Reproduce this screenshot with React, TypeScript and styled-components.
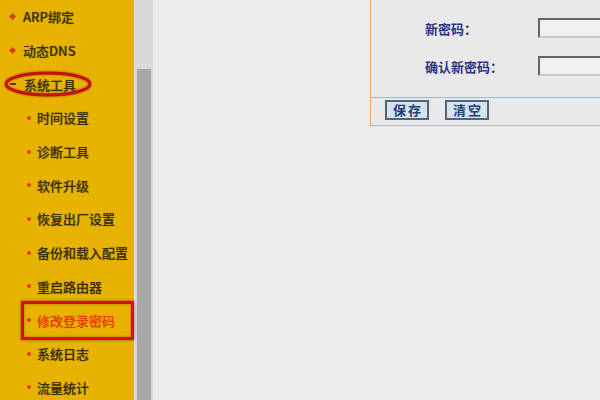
import styled, { createGlobalStyle } from 'styled-components';

const GlobalStyle = createGlobalStyle`
  html, body {
    margin: 0;
    padding: 0;
    width: 600px;
    height: 400px;
    overflow: hidden;
    background: #ebebeb;
    font-family: "Noto Sans CJK SC", "Liberation Sans", sans-serif;
  }
`;

type MenuItem = { label: string; level: 0 | 1; open?: boolean; active?: boolean; circled?: boolean };

const menu: MenuItem[] = [
  { label: 'ARP绑定', level: 0 },
  { label: '动态DNS', level: 0 },
  { label: '系统工具', level: 0, open: true, circled: true },
  { label: '时间设置', level: 1 },
  { label: '诊断工具', level: 1 },
  { label: '软件升级', level: 1 },
  { label: '恢复出厂设置', level: 1 },
  { label: '备份和载入配置', level: 1 },
  { label: '重启路由器', level: 1 },
  { label: '修改登录密码', level: 1, active: true },
  { label: '系统日志', level: 1 },
  { label: '流量统计', level: 1 },
];

// first row sits above the top edge; only its input's lower border shows
const fields = ['', '新密码：', '确认新密码：'];

export default function App() {
  return (
    <>
      <GlobalStyle />
      <Page>
        <Sidebar>
          {menu.map((m) => (
            <Item key={m.label} $level={m.level} $active={m.active}>
              <Bullet $level={m.level} $open={m.open} />
              <ItemText $active={m.active}>{m.label}</ItemText>
              {m.circled && (
                <Ellipse viewBox="0 0 90 28" width="90" height="28">
                  <ellipse cx="45" cy="14" rx="42" ry="11" fill="none" stroke="#c81010" strokeWidth="3" />
                </Ellipse>
              )}
            </Item>
          ))}
        </Sidebar>
        <Scrollbar>
          <Thumb />
        </Scrollbar>
        <Main>
          <Panel>
            <Form>
              {fields.map((f, i) => (
                <Row key={i}>
                  <Label>{f}</Label>
                  <Input type="password" />
                </Row>
              ))}
            </Form>
            <ButtonBar>
              <Button>保存</Button>
              <Button>清空</Button>
            </ButtonBar>
          </Panel>
        </Main>
      </Page>
    </>
  );
}

const Page = styled.div`
  display: flex;
  width: 600px;
  height: 400px;
  overflow: hidden;
`;

const Sidebar = styled.div`
  width: 134px;
  flex-shrink: 0;
  background: #e8b300;
  display: flex;
  flex-direction: column;
`;

const Item = styled.div<{ $level: number; $active?: boolean }>`
  position: relative;
  height: 33.7px;
  flex-shrink: 0;
  display: flex;
  align-items: center;
  padding-left: ${(p) => (p.$level === 0 ? 10 : 27)}px;
  gap: ${(p) => (p.$level === 0 ? 8 : 6)}px;

  ${(p) =>
    p.$active &&
    `
    &::after {
      content: '';
      position: absolute;
      left: 21px;
      right: 0;
      top: -2px;
      bottom: -3px;
      border: 3px solid #d41010;
      box-shadow: 0 0 3px rgba(120, 0, 0, 0.6), inset 0 0 3px rgba(120, 0, 0, 0.4);
    }
  `}
`;

const Bullet = styled.span<{ $level: number; $open?: boolean }>`
  display: inline-block;
  flex-shrink: 0;
  width: ${(p) => (p.$open ? 6 : p.$level === 0 ? 5 : 4)}px;
  height: ${(p) => (p.$open ? 2 : p.$level === 0 ? 5 : 4)}px;
  background: ${(p) => (p.$open ? '#6a3a00' : '#d8401a')};
  border-radius: ${(p) => (p.$level === 1 ? '50%' : '0')};
  transform: ${(p) => (p.$level === 0 && !p.$open ? 'rotate(45deg)' : 'none')};
`;

const ItemText = styled.span<{ $active?: boolean }>`
  font-size: 13px;
  font-weight: 500;
  white-space: nowrap;
  color: ${(p) => (p.$active ? '#e83c00' : '#3a3000')};
  text-shadow: 0 0 1px ${(p) => (p.$active ? 'rgba(232,60,0,0.5)' : 'rgba(58,48,0,0.5)')};
`;

const Ellipse = styled.svg`
  position: absolute;
  left: 3px;
  top: 3px;
  filter: drop-shadow(0 0 1px rgba(90, 0, 0, 0.6));
`;

const Scrollbar = styled.div`
  width: 19px;
  flex-shrink: 0;
  background: #d8d8d8;
  border-left: 1px solid #e4e4e4;
  padding: 69px 2px 0;
  box-sizing: border-box;
`;

const Thumb = styled.div`
  height: 100%;
  background: #a7a7a7;
`;

const Main = styled.div`
  flex: 1;
  background: #ebebeb;
  padding-left: 217px;
`;

const Panel = styled.div`
  width: 320px;
  margin-top: -45px;
  border: 1px solid #eda66a;
  background: #e9e9e9;
`;

const Form = styled.div`
  padding: 15px 0 12px 54px;
  display: flex;
  flex-direction: column;
`;

const Row = styled.div`
  height: 38px;
  display: flex;
  align-items: center;
`;

const Label = styled.span`
  width: 113px;
  flex-shrink: 0;
  font-size: 13px;
  font-weight: bold;
  color: #2c3585;
`;

const Input = styled.input`
  width: 120px;
  height: 20px;
  box-sizing: border-box;
  border: 2px solid #5c6a64;
  border-right-color: #c8c8c8;
  border-bottom-color: #c8c8c8;
  background: #f0f0f0;
  margin: 0;
`;

const ButtonBar = styled.div`
  border-top: 1px solid #eda66a;
  padding: 2px 14px 5px;
  display: flex;
  gap: 16px;
`;

const Button = styled.button`
  height: 20px;
  padding: 0 4px 0 6px;
  margin: 0;
  border: 2px solid #4e6676;
  background: #d6e2ec;
  font-family: "Noto Sans CJK SC", sans-serif;
  font-size: 13px;
  font-weight: bold;
  letter-spacing: 2px;
  color: #23407a;
  line-height: 14px;
`;
